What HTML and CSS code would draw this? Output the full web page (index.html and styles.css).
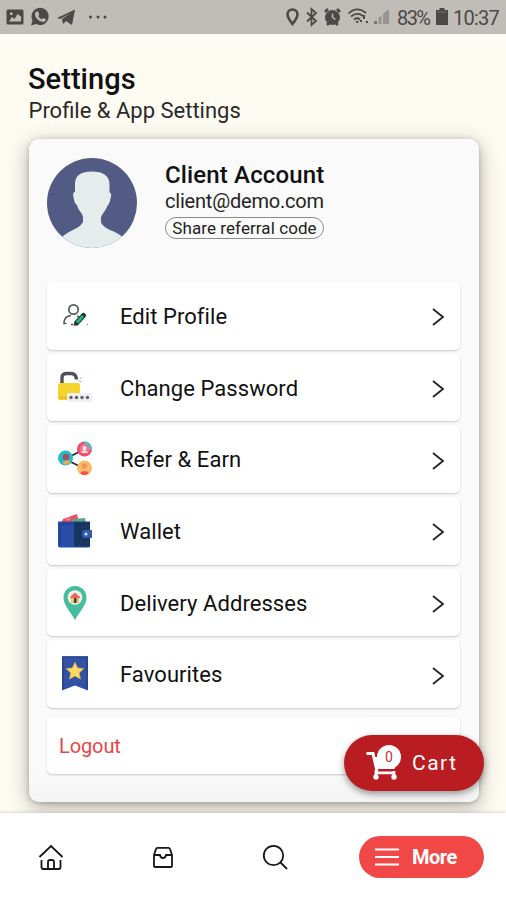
FILE: index.html
```html
<!DOCTYPE html>
<html lang="en">
<head>
<meta charset="utf-8">
<title>Settings</title>
<link rel="stylesheet" href="styles.css">
</head>
<body>
<div class="app">
  <header class="status">
    <svg class="status-left" viewBox="0 0 110 34" fill="#4b4947">
      <path fill-rule="evenodd" d="M8 9.500h14q1.500 0 1.500 1.500v12q0 1.500-1.500 1.500H8Q6.500 24.500 6.500 23V11q0-1.500 1.500-1.500zM9 21.500h12v-5l-3.500-2.500-3 5-2.500-2zM10 12.500v2.500h2.500v-2.500z"/>
      <path d="M31 25.500l1.500-5A8.600 8.600 0 1 1 36 24z"/>
      <path d="M36 12c1-1 2-1 2.500.5l.8 2-1 1.400c.8 1.700 2 2.700 3.600 3.400l1.400-1.400 2.600 1.300c0 2-2 3-4 2.500-3.500-.8-6.700-4.200-6.900-7.200 0-1 .4-1.900 1-2.500z" fill="#c0bcb7"/>
      <path d="M57 18L75 9.500 72 25l-6-4-3 3-1-5 9-6-11 6z"/>
      <circle cx="90.500" cy="17" r="1.500"/><circle cx="98" cy="17" r="1.500"/><circle cx="105" cy="17" r="1.500"/>
    </svg>
    <div class="status-right">
      <svg class="status-icons" viewBox="0 0 108 34" fill="none" stroke="#4b4947">
        <path d="M8.500 24C5 19.500 3.500 17 3.500 14.500a5 5 0 0 1 10 0C13.500 17 12 19.500 8.500 24z" stroke-width="2.600"/>
        <path d="M23 12.500l9 8.500-4.500 4V9l4.500 4-9 8.500" stroke-width="1.800"/>
        <circle cx="48.500" cy="17.500" r="7" fill="#4b4947"/>
        <path d="M41 12l3-3M56 12l-3-3M43 25l2-2M54 25l-2-2" stroke-width="2.800"/>
        <path d="M48.500 13.500v4l3 2" stroke="#c0bcb7" stroke-width="1.400"/>
        <path d="M64.500 13.500Q73 5.500 82 13M67 16.500Q73 11.500 79 16M70 19.500q3-2.500 6 0" stroke-width="1.700"/>
        <path d="M71.500 21h3.500l-1.700 2.500zM79 15h2v4h-2zM76 20h2v2h-2zM82 21h2v2h-2z" fill="#4b4947" stroke="none"/>
        <path d="M90 24v-3h3v3z" fill="#777470" stroke="none"/>
        <path d="M94.500 24v-6l3-2.500V24zM99 24V14l6-5v15z" fill="#969390" stroke="none"/>
      </svg>
      <span class="percent">83%</span>
      <svg class="battery" viewBox="0 0 12 18"><path d="M3.500 0h5v2H12v15H0V2h3.500z" fill="#4b4947"/><path d="M1.500 4h9" stroke="#77736f"/></svg>
      <span class="clock">10:37</span>
    </div>
  </header>

  <main class="content">
    <h1 class="title">Settings</h1>
    <p class="subtitle">Profile &amp; App Settings</p>

    <section class="panel">
      <div class="account">
        <svg class="avatar" viewBox="0 0 90 90">
          <defs><clipPath id="face"><circle cx="45" cy="45" r="45"/></clipPath></defs>
          <g clip-path="url(#face)">
            <path fill="#515b83" d="M0 0h90v90H0z"/>
            <path fill="#e4ecec" d="M45 13.500c11 0 17.500 4 17.500 13v8c2 0 2 3 1 6-.5 3-1.500 6-3 7-1.500 5-5.500 8-6.500 12v5c3 7 14 8 21 14v16H15V79c7-7 18-8 21-15v-5c-.5-4-5-7-6-12-2-1-3-4-3.300-7-1-3-.7-6 1.300-6v-8c0-9 6.500-12.500 17-12.500z"/>
          </g>
        </svg>
        <div class="account-info">
          <h2 class="name">Client Account</h2>
          <span class="email">client@demo.com</span>
          <span class="referral">Share referral code</span>
        </div>
      </div>

      <nav class="menu">
        <a class="row">
          <svg class="icon" viewBox="0 0 40 40" fill="none">
            <g stroke="#555b5b" stroke-width="1.700"><circle cx="18.500" cy="13.500" r="4.700"/><path d="M16 19.500c-5 .5-7 3.500-7 8h2.500m4.500 1h2.500M22 20l2 1"/></g>
            <path d="M21.500 27l7-7.500" stroke="#163b32" stroke-width="5" stroke-linecap="round"/>
            <path d="M22 26.500l6-6.500" stroke="#29b884" stroke-width="2.600"/>
            <path d="M19 29l2-.5" stroke="#333" stroke-width="1.500"/><circle cx="32.500" cy="28.500" r=".8" fill="#8a918f"/>
          </svg>
          <span class="label">Edit Profile</span>
          <svg class="chevron" viewBox="0 0 14 20"><path d="M2 2l10 8-10 8"/></svg>
        </a>
        <a class="row">
          <svg class="icon" viewBox="0 0 40 40" fill="none">
            <path d="M7 16V9.500Q7 5.500 12 5.500h4q5 0 5.500 6" stroke="#52515a" stroke-width="3.400"/>
            <path d="M23 12l4 2M25 9l1 2" stroke="#edb6bd" stroke-width="1.300"/>
            <rect x="3" y="15" width="22" height="17" rx="2.500" fill="#f4d52d"/><path d="M4 30h20" stroke="#e8bd29" stroke-width="2.500"/>
            <rect x="12" y="25" width="25" height="9" rx="1.500" fill="#efeff2"/>
            <g fill="#62626a"><circle cx="16" cy="29.500" r="1.700"/><circle cx="21.500" cy="29.500" r="1.700"/><circle cx="27" cy="29.500" r="1.700"/><circle cx="32.500" cy="29.500" r="1.700"/></g>
          </svg>
          <span class="label">Change Password</span>
          <svg class="chevron" viewBox="0 0 14 20"><path d="M2 2l10 8-10 8"/></svg>
        </a>
        <a class="row">
          <svg class="icon" viewBox="0 0 40 40">
            <path d="M30 10L10 20l20 10" fill="none" stroke="#282d36" stroke-width="1.800"/>
            <circle cx="29.500" cy="10" r="7.500" fill="#f54968"/><path d="M29.500 2.500a7.500 7.500 0 0 1 7.500 8l-4 1-5-5z" fill="#45c3cb"/><circle cx="29.500" cy="10" r="5" fill="#f36f88"/><circle cx="29.500" cy="9" r="2" fill="#fff0ed"/><path d="M25.500 14q4-6 8 0z" fill="#ffd4da"/>
            <circle cx="10.500" cy="19" r="7.500" fill="#24bcc7"/><circle cx="11" cy="18" r="3.300" fill="#9e555d"/><path d="M7 24q4.500-5 9-1l-4.500 3z" fill="#f3a45c"/>
            <circle cx="29.500" cy="29" r="7.500" fill="#f8bc63"/><circle cx="29.500" cy="27" r="2.800" fill="#ee9360"/><path d="M25 34q4.500-4 9 0-4.500 4-9 0z" fill="#f54c62"/>
          </svg>
          <span class="label">Refer &amp; Earn</span>
          <svg class="chevron" viewBox="0 0 14 20"><path d="M2 2l10 8-10 8"/></svg>
        </a>
        <a class="row">
          <svg class="icon" viewBox="0 0 40 40">
            <path d="M6 12l2-4 14-5 2 9z" fill="#f04c63"/><path d="M16 12l2-4 12-1 1 5z" fill="#5ba685"/><path d="M14 10l-4-2 6-1z" fill="#ff8190"/>
            <path d="M3 10.500h32v24.500q0 1.500-2 1.500H5q-2 0-2-2z" fill="#294ca7"/><path d="M19 11h16v24.500h-16z" fill="#173660"/><path d="M5 34.500V13h14" fill="none" stroke="#19398b"/>
            <path d="M28.500 19H37v8h-8.500q-3-4 0-8z" fill="#315cae"/><circle cx="31" cy="23" r="1.500" fill="#d5e0f2"/>
          </svg>
          <span class="label">Wallet</span>
          <svg class="chevron" viewBox="0 0 14 20"><path d="M2 2l10 8-10 8"/></svg>
        </a>
        <a class="row">
          <svg class="icon" viewBox="0 0 40 40">
            <path d="M20 37C15 28 8.500 22 8.500 14.500a11.500 11.500 0 0 1 23 0C31.500 22 25 28 20 37z" fill="#45bd9f"/><circle cx="20" cy="14.500" r="7.300" fill="#f4f1e4"/><path d="M16 14h8v6h-8z" fill="#f6c466"/><path d="M15 14L20 9.500l5 4.500v1H15z" fill="#e66961"/><path d="M19 15h2.500v5H19z" fill="#383d48"/>
          </svg>
          <span class="label">Delivery Addresses</span>
          <svg class="chevron" viewBox="0 0 14 20"><path d="M2 2l10 8-10 8"/></svg>
        </a>
        <a class="row">
          <svg class="icon" viewBox="0 0 40 40">
            <path d="M7 2.500h26v34l-13-5-13 5z" fill="#3452a4"/><path d="M7 3h26M8 3v32M32 3v32" fill="none" stroke="#26438f" stroke-width="1.500"/><path d="M20 8.500l2.600 5.500 6 .7-4.500 4.200 1.300 6-5.400-3-5.400 3 1.300-6-4.500-4.200 6-.7z" fill="#ffdb65" stroke="#e4b44a" stroke-width=".8"/>
          </svg>
          <span class="label">Favourites</span>
          <svg class="chevron" viewBox="0 0 14 20"><path d="M2 2l10 8-10 8"/></svg>
        </a>
        <a class="row logout"><span>Logout</span></a>
      </nav>
    </section>
  </main>

  <button class="cart">
    <svg class="cart-icon" viewBox="0 0 36 36" fill="none">
      <path d="M.5 7.500H7L11 25" stroke="#fff" stroke-width="3"/>
      <path d="M7.500 11H31l-2.500 12H11z" fill="#fff"/>
      <path d="M10 24v5M28 25v4M9 26.800h20" stroke="#fff" stroke-width="2.800"/>
      <circle cx="10" cy="31" r="2.700" fill="#fff"/><circle cx="28" cy="31" r="2.700" fill="#fff"/>
    </svg>
    <span class="count">0</span>
    <span class="cart-label">Cart</span>
  </button>

  <footer class="tabs">
    <svg class="tab-home" viewBox="0 0 26 28" fill="none"><path d="M1.500 14L13 3l11.500 11M3.500 17v7q0 2 2 2h15q2 0 2-2v-7M10 26v-7q0-2 2-2h2q2 0 2 2v7"/></svg>
    <svg class="tab-orders" viewBox="0 0 24 24" fill="none"><path d="M3 10v11q0 1 1 1h16q1 0 1-1V10l-2-6q-.4-1.200-1.500-1.200h-11Q5.400 2.800 5 4zM3 10h6q.5 3 3 3t3-3h6"/></svg>
    <svg class="tab-search" viewBox="0 0 26 26" fill="none"><circle cx="11.500" cy="11.500" r="9.700"/><path d="M18.500 18.500L25 25"/></svg>
    <button class="more">
      <svg class="bars" viewBox="0 0 24 18"><path d="M0 1.500h24M0 9h24M0 16.500h24" stroke="#fff" stroke-width="2.200"/></svg>
      <span>More</span>
    </button>
  </footer>
</div>
</body>
</html>
```

FILE: styles.css
```css
* { box-sizing: border-box; }
body { margin: 0; font-family: Roboto, "Liberation Sans", sans-serif; color: #111; }
h1, h2, p { margin: 0; }
button { border: 0; font-family: inherit; color: #fff; }
.app { position: relative; width: 506px; height: 900px; overflow: hidden; display: flex; flex-direction: column; background: #fefbf3; }
.status { flex: none; height: 34px; display: flex; justify-content: space-between; background: #c0bcb7; color: #4b4947; }
.status-left { width: 110px; height: 34px; }
.status-right { display: flex; align-items: center; width: 222px; }
.status-icons { width: 108px; height: 34px; margin-right: 5px; }
.percent, .clock { font-size: 20px; line-height: 34px; white-space: nowrap; padding-top: 1px; }
.percent { width: 35px; letter-spacing: -1.6px; }
.battery { width: 12px; height: 18px; margin-left: 4px; margin-right: 5px; }
.clock { letter-spacing: -.75px; }
.content { flex: none; height: 779px; padding: 0 28px; overflow: hidden; }
.title { margin-top: 28px; font-size: 29px; line-height: 34px; font-weight: 500; letter-spacing: .05px; }
.subtitle { padding: 1px 0 0 .5px; font-size: 22px; line-height: 28px; color: #292929; }
.panel { width: 450px; height: 663px; margin: 14px 0 0 1px; padding: 19px 18px 0; border-radius: 10px; background: linear-gradient(#fafafa 0 95%, #f3f4f3); box-shadow: 0 5px 20px rgba(75,73,65,.45), 0 1px 4px rgba(60,60,55,.28); }
.account { display: flex; height: 124px; gap: 28px; }
.avatar { flex: none; width: 90px; height: 90px; }
.account-info { display: flex; flex-direction: column; align-items: flex-start; padding-top: 2px; }
.name { font-size: 24px; line-height: 30px; font-weight: 500; letter-spacing: .15px; white-space: nowrap; }
.email { font-size: 20px; line-height: 23px; letter-spacing: -.2px; color: #252525; white-space: nowrap; }
.referral { width: 159px; height: 22px; margin-top: 4px; border: 1.500px solid #8b8b8b; border-radius: 12px; text-align: center; font-size: 17px; line-height: 20px; letter-spacing: .08px; white-space: nowrap; color: #222; }
.menu { display: flex; flex-direction: column; gap: 4px; width: 413px; }
.row { display: flex; align-items: center; height: 67.700px; padding: 0 15px 0 8px; background: #fff; border-radius: 5px; box-shadow: 0 1px 2px rgba(0,0,0,.2); }
.icon { width: 40px; height: 40px; margin-right: 25px; }
.label { flex: 1; font-size: 22px; line-height: 30px; padding-top: 2px; letter-spacing: .06px; }
.chevron { width: 14px; height: 20px; margin-top: 3px; fill: none; stroke: #222; stroke-width: 1.800; }
.logout { height: 57px; margin-top: 5px; padding-left: 12px; color: #e64546; font-size: 20px; letter-spacing: -.1px; }
.cart { position: absolute; left: 344px; top: 735px; width: 140px; height: 56px; padding: 0 0 0 22px; display: flex; align-items: center; border-radius: 28px; background: #b91d21; box-shadow: 0 3px 7px rgba(0,0,0,.4); }
.cart-icon { width: 36px; height: 36px; margin-top: 1px; }
.count { position: absolute; left: 33px; top: 10px; width: 24px; height: 24px; border-radius: 50%; background: #fff; color: #b93239; text-align: center; font-size: 14px; line-height: 24px; }
.cart-label { margin-left: 10px; font-size: 21px; font-weight: 400; letter-spacing: 1.500px; }
.tabs { position: relative; flex: 1; display: flex; align-items: center; padding: 0 22px 0 38px; background: #fff; box-shadow: 0 -1px 3px rgba(80,77,70,.2); }
.tabs > svg { flex: none; stroke: #171717; stroke-width: 1.800; }
.tab-home { width: 26px; height: 28px; }
.tab-orders { width: 24px; height: 24px; margin-left: 87px; }
.tab-search { width: 26px; height: 26px; margin-left: 87px; }
.more { width: 125px; height: 42px; margin-left: auto; padding: 0 0 0 16px; display: flex; align-items: center; gap: 13px; border-radius: 21px; background: #f24747; font-size: 20px; font-weight: 700; letter-spacing: -.5px; }
.bars { width: 24px; height: 18px; }
```
